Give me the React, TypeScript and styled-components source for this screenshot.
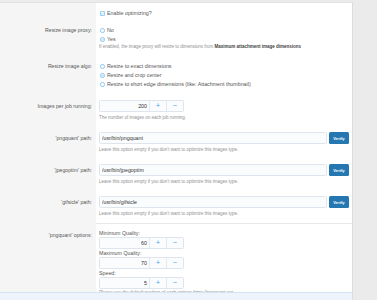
import * as React from 'react';
import styled, { createGlobalStyle } from 'styled-components';

const GlobalStyle = createGlobalStyle`
  body {
    margin: 0;
    background: #ebebeb;
    font-family: 'Liberation Sans', Arial, sans-serif;
    color: #505050;
  }
`;

const Page = styled.div`
  padding: 2px 24px 0 0;
`;

const Block = styled.div`
  background: #fff;
  border-top: 1px solid #e2e2e2;
  border-right: 1px solid #dcdcdc;
`;

const Row = styled.div<{ $pt?: number; $pb?: number }>`
  display: flex;

  & > * {
    padding-top: ${(p) => p.$pt ?? 5.5}px;
    padding-bottom: ${(p) => p.$pb ?? 5.5}px;
  }
`;

const Label = styled.div<{ $lh?: number }>`
  width: 96px;
  flex: none;
  box-sizing: border-box;
  background: #f5f5f5;
  text-align: right;
  padding-right: 4px;
  font-size: 5.2px;
  line-height: ${(p) => p.$lh ?? 9}px;
  color: #555;
`;

const Content = styled.div<{ $separated?: boolean }>`
  flex: 1;
  min-width: 0;
  padding-left: 3px;
  padding-right: 3px;
  font-size: 5.3px;
  line-height: 9px;
  ${(p) => p.$separated && 'border-top: 1px solid #e8e8e8;'}
`;

const Choice = styled.div`
  display: flex;
  align-items: center;
  gap: 2.5px;
  height: 9px;
  padding-left: 0.5px;
  color: #555;
`;

const Explain = styled.div<{ $mt?: number }>`
  font-size: 4.5px;
  line-height: 6px;
  color: #8f8f8f;
  margin-top: ${(p) => p.$mt ?? 0}px;
  white-space: nowrap;

  b {
    color: #444;
  }
`;

const InputLine = styled.div`
  display: flex;
  gap: 2px;
`;

const TextInput = styled.input`
  flex: 1;
  min-width: 0;
  height: 12px;
  box-sizing: border-box;
  border: 1px solid #dfe5ec;
  border-radius: 1.5px;
  background: #fafcfe;
  padding: 0 2px;
  font-family: inherit;
  font-size: 5.3px;
  color: #333;
  outline: none;
`;

const VerifyButton = styled.button`
  width: 20px;
  height: 12px;
  padding: 0;
  border: none;
  border-radius: 1.5px;
  background: #2577b1;
  color: #fff;
  font-family: inherit;
  font-size: 4.2px;
  font-weight: bold;
`;

const NumberBox = styled.div`
  display: flex;
  width: 85px;
  height: 12px;
  box-sizing: border-box;
  border: 1px solid #dfe5ec;
  border-radius: 1.5px;
  background: #fafcfe;
`;

const NumberField = styled.div`
  flex: 1;
  text-align: right;
  padding-right: 2px;
  font-size: 5.3px;
  line-height: 10px;
  color: #333;
`;

const StepButton = styled.div`
  width: 16px;
  flex: none;
  border-left: 1px solid #e3e9ef;
  text-align: center;
  color: #47a7eb;
  font-size: 7.5px;
  line-height: 10px;
`;

const SubLabel = styled.div`
  line-height: 8px;
  color: #555;
`;

// the sticky save bar covers the tail of the last explain line
const SubmitRow = styled.div`
  position: relative;
  margin-top: -4px;
  background: #edf4fb;
  border-top: 1px solid #d6e4f1;
  padding: 2px 0 2px 99px;
`;

const SaveButton = styled.button`
  width: 43px;
  height: 14px;
  padding: 0;
  border: none;
  border-radius: 1.5px;
  background: #2577b1;
  color: #fff;
  font-family: inherit;
  font-size: 5.3px;
  font-weight: bold;
`;

const BLUE = '#47a7eb';

const Radio = ({ checked }: { checked?: boolean }) => (
  <svg width="5" height="5" viewBox="0 0 10 10">
    <circle cx="5" cy="5" r="4.2" fill="none" stroke={BLUE} strokeWidth="1.2" />
    {checked && (
      <path d="M3 5.2 L4.5 6.6 L7.2 3.7" fill="none" stroke={BLUE} strokeWidth="1.2" />
    )}
  </svg>
);

const Checkbox = () => (
  <svg width="5" height="5" viewBox="0 0 10 10">
    <rect x="0.8" y="0.8" width="8.4" height="8.4" rx="1" fill="none" stroke={BLUE} strokeWidth="1.2" />
    <path d="M2.8 5.2 L4.4 6.7 L7.3 3.6" fill="none" stroke={BLUE} strokeWidth="1.2" />
  </svg>
);

const NumberInput = ({ value }: { value: number }) => (
  <NumberBox>
    <NumberField>{value}</NumberField>
    <StepButton>+</StepButton>
    <StepButton>−</StepButton>
  </NumberBox>
);

const EXPLAIN_PATH = "Leave this option empty if you don't want to optimize this images type.";

const binaries = [
  { label: "'pngquant' path:", value: '/usr/bin/pngquant' },
  { label: "'jpegoptim' path:", value: '/usr/bin/jpegoptim' },
  { label: "'gifsicle' path:", value: '/usr/bin/gifsicle' },
];

export default function App() {
  return (
    <Page>
      <GlobalStyle />
      <Block>
        <Row $pb={2.5}>
          <Label />
          <Content>
            <Choice>
              <Checkbox />
              Enable optimizing?
            </Choice>
          </Content>
        </Row>

        <Row>
          <Label>Resize image proxy:</Label>
          <Content>
            <Choice>
              <Radio />
              No
            </Choice>
            <Choice>
              <Radio checked />
              Yes
            </Choice>
            <Explain $mt={0.5}>
              If enabled, the image proxy will resize to dimensions from{' '}
              <b>Maximum attachment image dimensions</b>
            </Explain>
          </Content>
        </Row>

        <Row $pt={6.5}>
          <Label>Resize image algo:</Label>
          <Content>
            <Choice>
              <Radio />
              Resize to exact dimensions
            </Choice>
            <Choice>
              <Radio checked />
              Resize and crop center
            </Choice>
            <Choice>
              <Radio />
              Resize to short edge dimensions (like: Attachment thumbnail)
            </Choice>
          </Content>
        </Row>

        <Row>
          <Label $lh={12}>Images per job running:</Label>
          <Content>
            <NumberInput value={200} />
            <Explain $mt={3}>The number of images on each job running.</Explain>
          </Content>
        </Row>

        {binaries.map((bin) => (
          <Row key={bin.label}>
            <Label $lh={12}>{bin.label}</Label>
            <Content>
              <InputLine>
                <TextInput defaultValue={bin.value} readOnly />
                <VerifyButton>Verify</VerifyButton>
              </InputLine>
              <Explain $mt={3}>{EXPLAIN_PATH}</Explain>
            </Content>
          </Row>
        ))}

        <Row $pb={0}>
          <Label $lh={14}>'pngquant' options:</Label>
          <Content $separated>
            <SubLabel>Minimum Quality:</SubLabel>
            <NumberInput value={60} />
            <SubLabel>Maximum Quality:</SubLabel>
            <NumberInput value={70} />
            <SubLabel>Speed:</SubLabel>
            <NumberInput value={5} />
            <Explain $mt={1}>
              Please use the default position of each options https://pngquant.org
            </Explain>
          </Content>
        </Row>

        <SubmitRow>
          <SaveButton>Save</SaveButton>
        </SubmitRow>
      </Block>
    </Page>
  );
}
